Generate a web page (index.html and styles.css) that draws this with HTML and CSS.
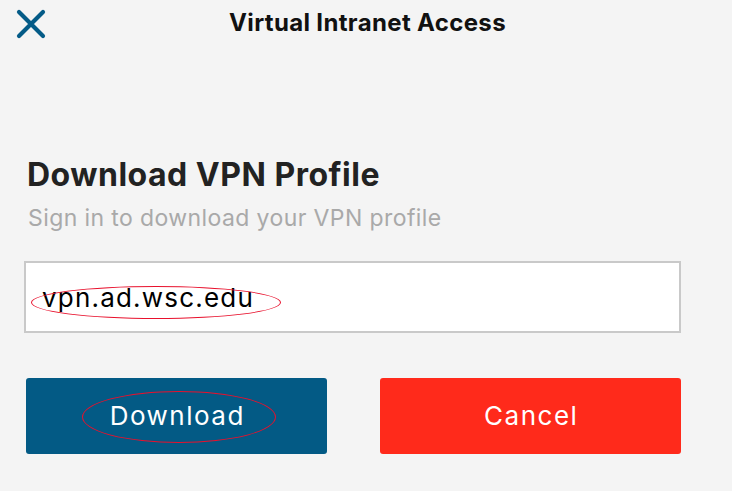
FILE: index.html
```html
<!DOCTYPE html>
<html lang="en">
<head>
<meta charset="utf-8">
<title>Virtual Intranet Access</title>
<link rel="stylesheet" href="styles.css">
</head>
<body>
<header class="topbar">
  <button class="close" aria-label="Close">
    <svg width="30" height="30" viewBox="0 0 30 30"><path d="M3 3 L27 27 M27 3 L3 27" stroke="#045b87" stroke-width="4.2" stroke-linecap="round" fill="none"/></svg>
  </button>
  <h1 class="title">Virtual Intranet Access</h1>
  <span></span>
</header>
<main class="content">
  <h2 class="heading">Download VPN Profile</h2>
  <p class="sub">Sign in to download your VPN profile</p>
  <div class="field">
    <span class="field-text">vpn.ad.wsc.edu</span>
    <span class="mark mark-field"></span>
  </div>
  <div class="actions">
    <button class="btn btn-primary">Download<span class="mark mark-btn"></span></button>
    <button class="btn btn-cancel">Cancel</button>
  </div>
</main>
</body>
</html>
```

FILE: styles.css
```css
* { box-sizing: border-box; }
html, body { margin: 0; padding: 0; }
body {
  width: 732px;
  height: 491px;
  background: #f4f4f4;
  font-family: Inter, "Liberation Sans", Arial, sans-serif;
  color: #111;
  overflow: hidden;
}
.topbar {
  display: grid;
  grid-template-columns: 1fr auto 1fr;
  align-items: center;
  height: 46px;
}
.close {
  justify-self: start;
  margin-left: 16px;
  margin-top: 2px;
  padding: 0;
  border: 0;
  background: none;
  width: 30px;
  height: 30px;
  display: block;
}
.close svg { display: block; }
.title {
  margin: 0;
  padding-left: 3px;
  font-size: 24px;
  font-weight: 700;
  line-height: 28px;
  letter-spacing: 0.35px;
  color: #111;
}
.content {
  padding: 109px 0 0 24px;
}
.heading {
  margin: 0 0 0 3px;
  font-size: 32px;
  line-height: 40px;
  font-weight: 700;
  letter-spacing: 0.5px;
  color: #222;
}
.sub {
  margin: 10px 0 0 4px;
  font-size: 23px;
  line-height: 26px;
  letter-spacing: 0.4px;
  color: #a9a9a9;
}
.field {
  position: relative;
  margin-top: 30px;
  width: 657px;
  height: 72px;
  background: #fff;
  border: 2px solid #c9c9c9;
  display: flex;
  align-items: center;
  padding: 0 0 0 16px;
}
.field-text {
  font-size: 26px;
  letter-spacing: 1.2px;
  color: #000;
}
.mark {
  position: absolute;
  border: 1.3px solid #e8112d;
  border-radius: 50%;
  pointer-events: none;
}
.mark-field {
  left: 5px;
  top: 23px;
  width: 250px;
  height: 33px;
}
.actions {
  display: flex;
  gap: 53px;
  margin: 45px 0 0 2px;
}
.btn {
  position: relative;
  width: 301px;
  height: 76px;
  border: 0;
  border-radius: 3px;
  color: #fff;
  font-family: Inter, "Liberation Sans", Arial, sans-serif;
  font-size: 26px;
  letter-spacing: 1.5px;
  padding: 0 0 2px 1.5px;
}
.btn-primary { background: #035a85; }
.btn-cancel { background: #ff2a1b; }
.mark-btn {
  left: 56px;
  top: 13px;
  width: 194px;
  height: 52px;
}
```
